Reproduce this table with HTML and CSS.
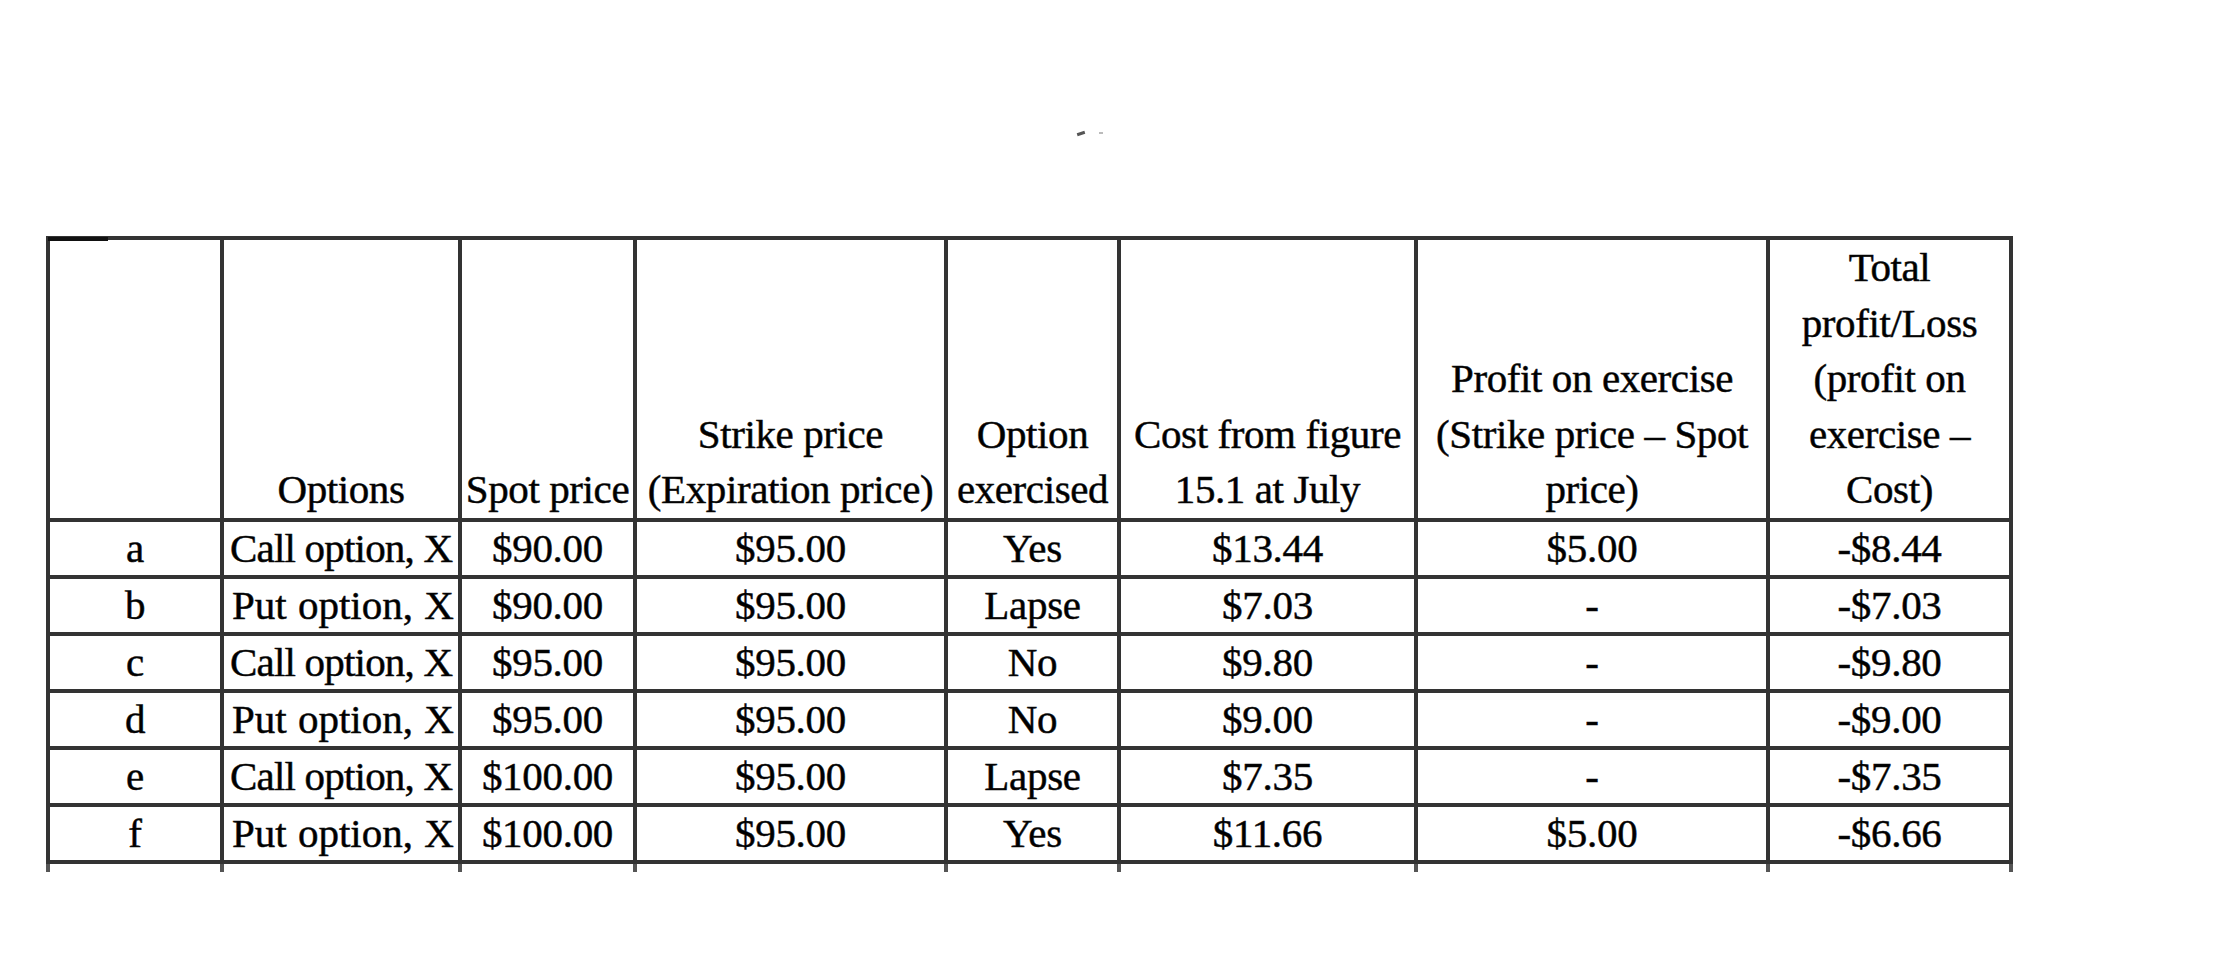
FILE: index.html
```html
<!DOCTYPE html>
<html lang="en">
<head>
<meta charset="utf-8">
<title>Options profit and loss</title>
<link rel="stylesheet" href="styles.css">
</head>
<body>
<div class="page">
  <div class="speck"><span class="speck-a"></span><span class="speck-b"></span></div>
  <table class="grid">
    <colgroup>
      <col class="c1"><col class="c2"><col class="c3"><col class="c4"><col class="c5"><col class="c6"><col class="c7"><col class="c8">
    </colgroup>
    <thead>
      <tr>
        <th class="corner"></th>
        <th>Options</th>
        <th>Spot price</th>
        <th>Strike price<br>(Expiration price)</th>
        <th>Option<br>exercised</th>
        <th>Cost from figure<br>15.1 at July</th>
        <th>Profit on exercise<br>(Strike price – Spot<br>price)</th>
        <th>Total<br>profit/Loss<br>(profit on<br>exercise –<br>Cost)</th>
      </tr>
    </thead>
    <tbody>
      <tr><td>a</td><td class="left call">Call option, X</td><td>$90.00</td><td>$95.00</td><td>Yes</td><td>$13.44</td><td>$5.00</td><td>-$8.44</td></tr>
      <tr><td>b</td><td class="left put">Put option, X</td><td>$90.00</td><td>$95.00</td><td>Lapse</td><td>$7.03</td><td>-</td><td>-$7.03</td></tr>
      <tr><td>c</td><td class="left call">Call option, X</td><td>$95.00</td><td>$95.00</td><td>No</td><td>$9.80</td><td>-</td><td>-$9.80</td></tr>
      <tr><td>d</td><td class="left put">Put option, X</td><td>$95.00</td><td>$95.00</td><td>No</td><td>$9.00</td><td>-</td><td>-$9.00</td></tr>
      <tr><td>e</td><td class="left call">Call option, X</td><td>$100.00</td><td>$95.00</td><td>Lapse</td><td>$7.35</td><td>-</td><td>-$7.35</td></tr>
      <tr><td>f</td><td class="left put">Put option, X</td><td>$100.00</td><td>$95.00</td><td>Yes</td><td>$11.66</td><td>$5.00</td><td>-$6.66</td></tr>
      <tr class="tail"><td></td><td></td><td></td><td></td><td></td><td></td><td></td><td></td></tr>
    </tbody>
  </table>
</div>
</body>
</html>
```

FILE: styles.css
```css
html, body {
  margin: 0;
  padding: 0;
  background: #ffffff;
}

.page {
  padding-top: 131px;
  padding-left: 46px;
  font-family: "Liberation Serif", "Times New Roman", serif;
  color: #000000;
}

.speck {
  display: flex;
  align-items: center;
  gap: 14px;
  margin-left: 1031px;
  height: 4px;
}

.speck-a {
  display: block;
  width: 8px;
  height: 3px;
  background: #555555;
  transform: rotate(-18deg);
}

.speck-b {
  display: block;
  width: 4px;
  height: 2px;
  background: #bbbbbb;
}

.grid {
  margin-top: 101px;
  border-collapse: collapse;
  table-layout: fixed;
  width: 1967px;
  font-size: 41px;
  -webkit-text-stroke: 0.5px #111111;
}

.c1 { width: 174px; }
.c2 { width: 238px; }
.c3 { width: 175px; }
.c4 { width: 311px; }
.c5 { width: 173px; }
.c6 { width: 297px; }
.c7 { width: 352px; }
.c8 { width: 243px; }

.grid th,
.grid td {
  border: 4px solid #333333;
  padding: 0;
  text-align: center;
  white-space: nowrap;
  overflow: visible;
}

.grid th {
  font-weight: normal;
  line-height: 55.6px;
  vertical-align: bottom;
  letter-spacing: -0.4px;
}

.grid td {
  line-height: 53px;
  vertical-align: middle;
  letter-spacing: -0.3px;
}

.grid td.left {
  text-align: left;
  padding-left: 6px;
}

.grid td.call {
  letter-spacing: -0.8px;
}

.grid td.put {
  padding-left: 8px;
  letter-spacing: 0;
  word-spacing: 1px;
}

.corner {
  position: relative;
}

.corner::before {
  content: "";
  position: absolute;
  left: -2px;
  top: -3px;
  width: 60px;
  height: 4px;
  background: #111111;
}

.grid tr.tail td {
  line-height: 0;
  height: 8px;
  border-bottom: none;
  border-left-color: #555555;
  border-right-color: #555555;
}
```
